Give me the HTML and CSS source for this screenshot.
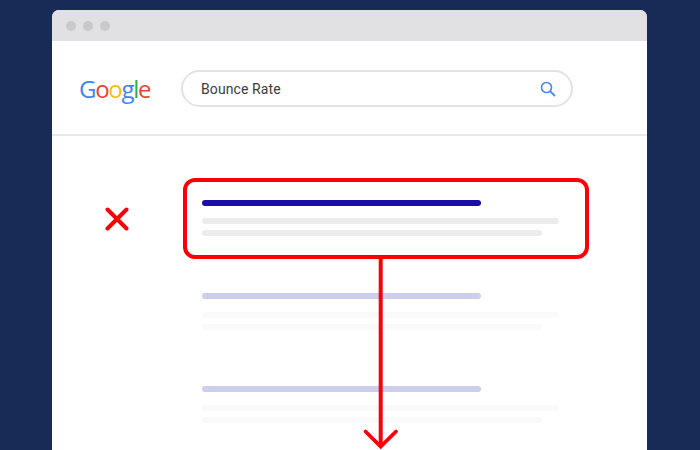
FILE: index.html
```html
<!DOCTYPE html>
<html lang="en">
<head>
  <meta charset="UTF-8" />
  <meta name="viewport" content="width=device-width, initial-scale=1.0"/>
  <title>Bounce Rate</title>
  <link rel="stylesheet" href="styles.css">
</head>
<body>
  <div class="window">
    <div class="titlebar">
      <span class="dot"></span>
      <span class="dot"></span>
      <span class="dot"></span>
    </div>
    <header class="search-header">
      <div class="logo"><span class="blue">G</span><span class="red">o</span><span class="yellow">o</span><span class="blue">g</span><span class="green">l</span><span class="red">e</span></div>
      <div class="search-box">
        <span class="query">Bounce Rate</span>
        <svg class="search-icon" width="18" height="18" viewBox="0 0 18 18" fill="none">
          <circle cx="7.5" cy="7.5" r="5" stroke="#4a8af4" stroke-width="1.7"/>
          <path d="M11.3 11.3 L16 16" stroke="#4a8af4" stroke-width="1.9"/>
        </svg>
      </div>
    </header>
    <main class="results">
      <svg class="cross" width="24" height="24" viewBox="0 0 24 24" fill="none">
        <path d="M2.5 2.5 L21.5 21.5 M21.5 2.5 L2.5 21.5" stroke="#fb0007" stroke-width="4" stroke-linecap="round"/>
      </svg>
      <div class="result result-bad">
        <div class="result-title"></div>
        <div class="result-line"></div>
        <div class="result-line short"></div>
      </div>
      <div class="result result-faded">
        <div class="result-title"></div>
        <div class="result-line"></div>
        <div class="result-line short"></div>
      </div>
      <div class="result result-faded">
        <div class="result-title"></div>
        <div class="result-line"></div>
        <div class="result-line short"></div>
      </div>
    </main>
    <svg class="arrow" width="40" height="192" viewBox="0 0 40 192" fill="none">
      <path d="M20.7 0 V187" stroke="#fb0007" stroke-width="4"/>
      <path d="M5.5 172.5 L20.7 187.5 L36 172.5" stroke="#fb0007" stroke-width="3.8" stroke-linecap="round" stroke-linejoin="miter"/>
    </svg>
  </div>
</body>
</html>
```

FILE: styles.css
```css
html, body {
  height: 450px;
  overflow: hidden;
}
body {
  margin: 0;
  padding-top: 10px;
  box-sizing: border-box;
  background: #182a56;
  font-family: Roboto, "Liberation Sans", sans-serif;
}
.window {
  position: relative;
  width: 595px;
  height: 440px;
  margin-left: 52px;
  background: #fff;
  border-radius: 7px 7px 0 0;
  overflow: hidden;
}
.titlebar {
  display: flex;
  align-items: center;
  gap: 7px;
  height: 31px;
  padding-left: 14px;
  background: #e1e1e3;
}
.dot {
  width: 10px;
  height: 10px;
  border-radius: 50%;
  background: #c9c9cb;
}
.search-header {
  display: flex;
  align-items: center;
  height: 91px;
  padding: 2px 0 0 27px;
  border-bottom: 2px solid #e8e8ea;
  box-sizing: content-box;
}
.logo {
  width: 102px;
  font-family: "Open Sans", sans-serif;
  font-size: 24px;
  font-weight: 500;
  letter-spacing: -1.3px;
  line-height: 30px;
}
.blue { color: #4285f4; }
.red { color: #ea4335; }
.yellow { color: #fbbc05; }
.green { color: #34a853; }
.search-box {
  display: flex;
  align-items: center;
  justify-content: space-between;
  box-sizing: border-box;
  width: 392px;
  height: 37px;
  padding: 0 14px 0 18px;
  border: 2px solid #e3e3e6;
  border-radius: 19px;
}
.query {
  font-size: 14px;
  color: #3c3c3c;
  letter-spacing: 0.1px;
}
.results {
  display: grid;
  grid-template-columns: 131px 406px;
  row-gap: 13px;
  padding-top: 42px;
}
.cross {
  grid-row: 1;
  align-self: center;
  margin-left: 53px;
}
.result {
  grid-column: 2;
  box-sizing: border-box;
  height: 80px;
  padding: 21px 30px 0 19px;
}
.result-bad {
  grid-row: 1;
  height: 81px;
  border: 4px solid #fb0007;
  border-radius: 12px;
  padding: 18px 26px 0 15px;
}
.result-title {
  width: 279px;
  height: 6px;
  border-radius: 3px;
  background: #1a0dab;
}
.result-line {
  height: 6px;
  margin-top: 12px;
  border-radius: 3px;
  background: #ececec;
}
.result-line.short {
  width: 340px;
  margin-top: 6px;
}
.result-faded .result-title { background: #cdcdec; }
.result-faded .result-line { background: #fafafa; margin-top: 13px; }
.result-faded .result-line.short { margin-top: 6px; }
.arrow {
  position: absolute;
  left: 308px;
  top: 249px;
}
```
